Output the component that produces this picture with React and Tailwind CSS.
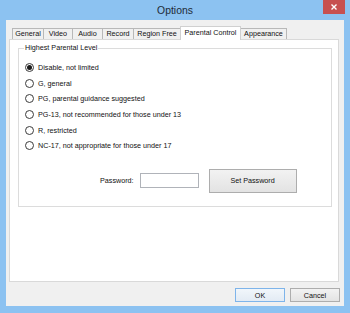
import React from "react";

const tabs = [
  { label: "General", cls: "w-[32px]" },
  { label: "Video", cls: "w-[30px]" },
  { label: "Audio", cls: "w-[31px]" },
  { label: "Record", cls: "w-[32px]" },
  { label: "Region Free", cls: "w-[48px]" },
  { label: "Parental Control", cls: "w-[61px]", active: true },
  { label: "Appearance", cls: "w-[47px]" },
];

const levels = [
  "Disable, not limited",
  "G, general",
  "PG, parental guidance suggested",
  "PG-13, not recommended for those under 13",
  "R, restricted",
  "NC-17, not appropriate for those under 17",
];

function Radio({ checked }) {
  return (
    <span className="flex h-[9px] w-[9px] items-center justify-center rounded-full border border-[#3c3c3c] bg-white">
      {checked ? <span className="h-[5px] w-[5px] rounded-full bg-[#1a1a1a]" /> : null}
    </span>
  );
}

export default function App() {
  return (
    <div
      className="flex h-[313px] w-[350px] flex-col bg-[#8cc2f1] text-[#111]"
      style={{ fontFamily: '"Liberation Sans", Arial, sans-serif' }}
    >
      {/* title bar */}
      <div className="grid h-[20px] grid-cols-[1fr_auto_1fr] items-start">
        <div />
        <div className="pt-[4px] text-[10.4px] leading-[13px] text-[#1e2a36]">Options</div>
        <div className="flex justify-end pr-[5px]">
          <div className="flex h-[14px] w-[22px] items-center justify-center bg-[#c75050]">
            <svg width="6" height="6" viewBox="0 0 6 6">
              <path d="M0.5 0.5 L5.5 5.5 M5.5 0.5 L0.5 5.5" stroke="#fff" strokeWidth="1.4" />
            </svg>
          </div>
        </div>
      </div>

      {/* client */}
      <div className="mx-[6px] mb-[7px] flex flex-1 flex-col bg-[#f0f0f0] pt-[6px] text-[7.2px]">
        <div className="flex h-[13px] items-end pl-[6px]">
          {tabs.map((t, i) => (
            <div
              key={t.label}
              className={`${t.cls} ${i ? "-ml-px" : ""} ${
                t.active
                  ? "relative z-10 -mb-px h-[14px] border-[#d0d0d0] bg-white pb-[1px]"
                  : "h-[11px] border-[#b8b8b8] bg-[#f0f0f0]"
              } flex items-center justify-center whitespace-nowrap border border-b-0 leading-[8px]`}
            >
              {t.label}
            </div>
          ))}
        </div>

        <div className="ml-[3px] mr-[5px] h-[243px] border border-[#d9d9d9] bg-white">
          <fieldset className="ml-[8px] mr-[6px] mt-[4px] border border-[#dcdcdc] pb-[13px]">
            <legend className="ml-[5px] px-[1px] leading-[8px]">Highest Parental Level</legend>
            <div className="flex flex-col pt-[8px]">
              {levels.map((l, i) => (
                <div key={l} className="flex h-[15.6px] items-center">
                  <span className="ml-[6px] mr-[4px]">
                    <Radio checked={i === 0} />
                  </span>
                  <span className="leading-[9px]">{l}</span>
                </div>
              ))}
            </div>
            <div className="ml-[81px] mt-[15px] flex items-center">
              <span className="leading-[9px]">Password:</span>
              <div className="ml-[6px] h-[15px] w-[59px] border border-[#b0b3b9] bg-white" />
              <button className="ml-[10px] flex h-[24px] w-[88px] items-center justify-center border border-[#adadad] bg-gradient-to-b from-[#f2f2f2] to-[#e3e3e3] leading-[9px]">
                Set Password
              </button>
            </div>
          </fieldset>
        </div>

        <div className="mr-[4px] mt-[6px] flex justify-end gap-[5px]">
          <button className="flex h-[14px] w-[50px] items-center justify-center border border-[#7eb4ea] bg-gradient-to-b from-[#f1f6fb] to-[#e3ebf4] leading-[9px]">
            OK
          </button>
          <button className="flex h-[14px] w-[50px] items-center justify-center border border-[#adadad] bg-gradient-to-b from-[#f2f2f2] to-[#e3e3e3] leading-[9px]">
            Cancel
          </button>
        </div>
      </div>
    </div>
  );
}
